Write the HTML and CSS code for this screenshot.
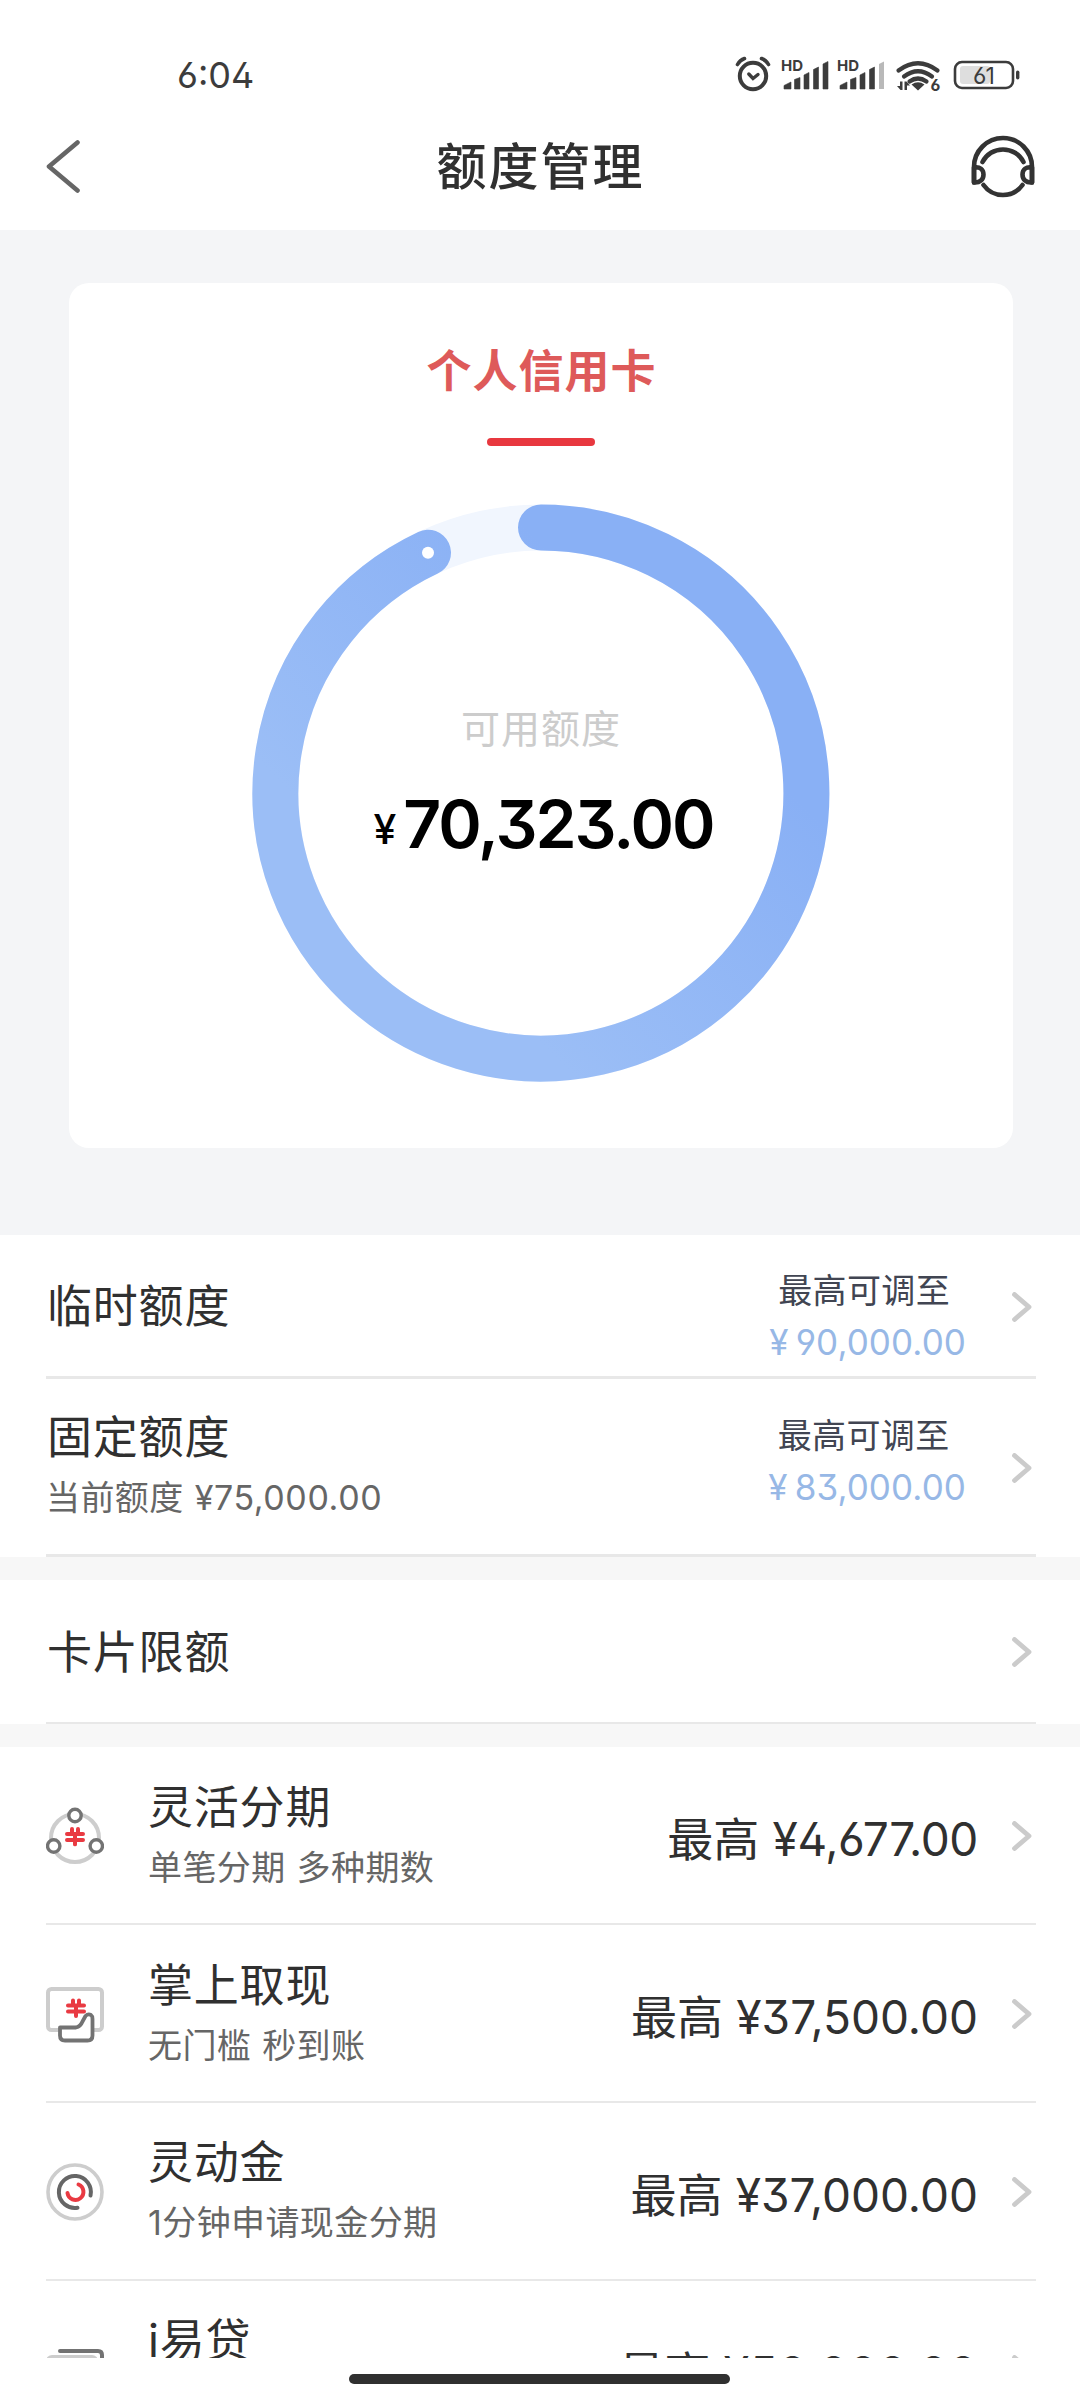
FILE: index.html
```html
<!DOCTYPE html>
<html lang="zh-CN">
<head>
<meta charset="utf-8">
<title>额度管理</title>
<link rel="stylesheet" href="styles.css">
</head>
<body>
<svg class="defs" width="0" height="0">
  <symbol id="chevron" viewBox="0 0 20 30"><path d="M2.500 2.500L17 15L2.500 27.500" fill="none" stroke="#cbcbcb" stroke-width="4.800" stroke-linecap="round" stroke-linejoin="round"/></symbol>
  <symbol id="yen" viewBox="0 0 20 20"><path d="M7 2.500V7.500M13 2.500V7.500M2 7.500H18M2 13.500H18M10 8V18" fill="none" stroke="#e93a42" stroke-width="4" stroke-linecap="round"/></symbol>
</svg>
<div class="screen">
  <header class="top">
    <div class="status">
      <span class="time num">6:04</span>
      <svg class="status-icons" width="290" height="44" viewBox="0 0 290 44" fill="none" stroke="#3c3c3c">
        <g stroke-width="4" stroke-linecap="round">
          <circle cx="18" cy="24" r="13.200"/>
          <path d="M2.500 12.500Q5 8 9.500 6.500M33.500 12.500Q31 8 26.500 6.500" stroke-width="3.600"/>
          <path d="M13.800 22L18 26.500L23 22.500" stroke-width="3.400"/>
        </g>
        <g fill="#3c3c3c" stroke="none">
          <g id="sig">
            <path d="M49 37V33.500L56 30V37ZM59.500 37V27.500L65 25.500V37ZM69 37V23L74 20.500V37ZM78.500 37V17.500L83.500 15V37Z" stroke="#3c3c3c" stroke-width=".6" stroke-linejoin="round"/>
            <text x="46" y="19" class="hd">HD</text>
          </g>
          <use href="#sig" x="56"/>
          <path d="M88 37V12L93 9.500V37Z" stroke="#3c3c3c" stroke-width=".6"/>
          <path d="M144 37V12L149 9.500V37Z" fill="#b9b9b9"/>
          <path d="M183 38.500L176.500 32.500Q183 28 189.500 32.500Z"/>
          <path d="M167.500 29.500V38H165.500L162 34H165V29.500ZM169.500 38V29.500H171.500L175 33.500H172V38Z"/>
          <text x="195.500" y="39" class="wifi6">6</text>
          <rect x="281" y="18.500" width="3.400" height="9" rx="1.700"/>
          <rect x="225" y="14" width="30" height="18" rx="3" fill="#dedede"/>
          <text x="238" y="31.500" class="pct">61</text>
        </g>
        <path d="M163.500 18.500Q183 4 202.500 18.500M169 24.500Q183 14 197 24.500M174.500 29.500Q183 23.500 191.500 29.500" stroke-width="4.200" stroke-linecap="round"/>
        <rect x="220" y="10" width="58" height="26" rx="7" stroke-width="2.600"/>
      </svg>
    </div>
    <div class="nav">
      <svg class="back" width="36" height="56" viewBox="0 0 36 56"><path d="M31.500 4.500L3 28.500L31.500 52.500" fill="none" stroke="#666" stroke-width="4.600" stroke-linecap="round" stroke-linejoin="round"/></svg>
      <h1 class="title">额度管理</h1>
      <svg class="service" width="64" height="64" viewBox="0 0 64 64" fill="none" stroke="#333" stroke-width="4.600" stroke-linecap="round">
        <path d="M3 48.500V33A29 29 0 0 1 61 33V48.500" stroke-linejoin="round"/>
        <path d="M3 48.500V33.500C9 32.500 12.500 35.500 12.500 40.500S9 49 3 48.500ZM61 48.500V33.500C55 32.500 51.500 35.500 51.500 40.500S55 49 61 48.500Z" stroke-linejoin="round"/>
        <path d="M11.500 28A23 23 0 0 1 52.500 28M12.500 51A24 24 0 0 0 51.500 51"/>
      </svg>
    </div>
  </header>

  <main class="content">
    <section class="hero">
      <div class="card">
        <div class="tab">个人信用卡</div>
        <div class="tab-line"></div>
        <div class="ring">
          <svg width="578" height="578" viewBox="0 0 578 578" fill="none">
            <defs><linearGradient id="blue" x1="420" y1="170" x2="170" y2="420" gradientUnits="userSpaceOnUse"><stop offset="0" stop-color="#89b0f5"/><stop offset="1" stop-color="#9bbef6"/></linearGradient></defs>
            <circle cx="289" cy="289" r="265.500" stroke="#f1f6fe" stroke-width="46"/>
            <path d="M289 23.500A265.500 265.500 0 1 1 176 48.700" stroke="url(#blue)" stroke-width="46" stroke-linecap="round"/>
            <circle cx="176" cy="48.700" r="6" fill="#fff"/>
          </svg>
          <div class="ring-text">
            <div class="ring-label">可用额度</div>
            <div class="ring-value num"><span class="cur">¥</span>70,323.00</div>
          </div>
        </div>
      </div>
    </section>

    <section class="group thick">
      <div class="row short">
        <div class="name">临时额度</div>
        <div class="adjust low"><span class="hint">最高可调至</span><span class="blue num"><i>¥</i>90,000.00</span></div>
        <svg class="go"><use href="#chevron"/></svg>
      </div>
      <div class="row tall">
        <div class="text"><div class="name">固定额度</div><div class="sub">当前额度 <span class="num amount">¥75,000.00</span></div></div>
        <div class="adjust high"><span class="hint">最高可调至</span><span class="blue num"><i>¥</i>83,000.00</span></div>
        <svg class="go"><use href="#chevron"/></svg>
      </div>
    </section>

    <section class="group">
      <div class="row short">
        <div class="name">卡片限额</div>
        <svg class="go"><use href="#chevron"/></svg>
      </div>
    </section>

    <section class="group">
      <div class="row tall">
        <svg class="icon" viewBox="0 0 58 60" fill="none">
          <circle cx="29" cy="32" r="24" stroke="#cdcdcd" stroke-width="4"/>
          <g fill="#fff" stroke="#737373" stroke-width="3.400"><circle cx="29" cy="9.500" r="6.200"/><circle cx="7.700" cy="40" r="6.200"/><circle cx="50.300" cy="40" r="6.200"/></g>
          <use href="#yen" x="19" y="20.500" width="20" height="20"/>
        </svg>
        <div class="text"><div class="name">灵活分期</div><div class="sub">单笔分期 多种期数</div></div>
        <div class="max">最高 <span class="num narrow">¥4,677.00</span></div>
        <svg class="go"><use href="#chevron"/></svg>
      </div>
      <div class="row tall">
        <svg class="icon" viewBox="0 0 58 60" fill="none">
          <rect x="2" y="5" width="54" height="41" rx="3.500" stroke="#cdcdcd" stroke-width="4"/>
          <path d="M14 43.500H30Q34.500 42.500 36.500 37.500L39.500 32Q42 29.500 45 31Q46.500 32 46.500 35V51.500Q46.500 56.500 41.500 56.500H19Q14 56.500 14 51.500Z" fill="#fff" stroke="#737373" stroke-width="3.800" stroke-linejoin="round"/>
          <use href="#yen" x="20" y="14" width="20" height="20"/>
        </svg>
        <div class="text"><div class="name">掌上取现</div><div class="sub">无门槛 秒到账</div></div>
        <div class="max">最高 <span class="num">¥37,500.00</span></div>
        <svg class="go"><use href="#chevron"/></svg>
      </div>
      <div class="row tall">
        <svg class="icon" viewBox="0 0 58 60" fill="none" stroke-linecap="round">
          <circle cx="29" cy="30" r="27" stroke="#cdcdcd" stroke-width="3.600"/>
          <path d="M44.500 33.500A16 16 0 1 0 31.500 45.800" stroke="#666" stroke-width="4"/>
          <path d="M32.500 22.500A8 8 0 1 1 21.500 31" stroke="#e93a42" stroke-width="4"/>
        </svg>
        <div class="text"><div class="name">灵动金</div><div class="sub"><span class="num">1</span>分钟申请现金分期</div></div>
        <div class="max">最高 <span class="num">¥37,000.00</span></div>
        <svg class="go"><use href="#chevron"/></svg>
      </div>
      <div class="row tall">
        <svg class="icon" viewBox="0 0 58 60" fill="none" stroke-linecap="round">
          <path d="M14 11H52Q56 11 56 15V42" stroke="#737373" stroke-width="4"/>
          <rect x="2" y="17" width="48" height="36" rx="4" stroke="#cdcdcd" stroke-width="4"/>
        </svg>
        <div class="text first-line"><div class="name"><span class="num">i</span>易贷</div></div>
        <div class="max">最高 <span class="num wide">¥50,000.00</span></div>
        <svg class="go"><use href="#chevron"/></svg>
      </div>
    </section>
  </main>

  <footer class="gesture"><div class="pill"></div></footer>
</div>
</body>
</html>
```
FILE: styles.css
```css
* { box-sizing: border-box; margin: 0; padding: 0; }

body {
  width: 1080px;
  background: #fff;
  color: #303030;
  font-family: "Noto Sans CJK SC", sans-serif;
}

.defs { display: block; position: absolute; }

.num {
  font-family: Inter, "Noto Sans CJK SC", sans-serif;
  font-feature-settings: "ss01", "cv09";
}

.screen {
  display: flex;
  flex-direction: column;
  width: 1080px;
  height: 2400px;
  overflow: hidden;
}

.top { flex: none; height: 230px; background: #fff; }

.status {
  display: flex;
  justify-content: space-between;
  height: 100px;
  padding: 52px 55px 0 177px;
}

.time { font-size: 36px; line-height: 46px; color: #3c3c3c; }

.status-icons { display: block; }
.hd { font: 700 15px Inter, sans-serif; }
.wifi6 { font: 700 16px Inter, sans-serif; font-feature-settings: "ss01"; }
.pct { font: 400 23px Inter, sans-serif; font-feature-settings: "ss01"; letter-spacing: -1px; }

.nav {
  display: flex;
  align-items: center;
  justify-content: space-between;
  height: 132px;
  padding: 0 45px 0 46px;
}

.back { margin-right: 28px; }

.title {
  padding-bottom: 6px;
  font-size: 50px;
  font-weight: 500;
  line-height: 60px;
  letter-spacing: 2px;
}

.content { flex: none; height: 2128px; overflow: hidden; }

.hero {
  height: 1005px;
  padding: 53px 67px 0 69px;
  background: #f4f5f7;
}

.card {
  display: flex;
  flex-direction: column;
  align-items: center;
  height: 865px;
  padding-top: 54px;
  border-radius: 20px;
  background: #fff;
}

.tab {
  padding-left: 1px;
  font-size: 45px;
  font-weight: 700;
  line-height: 64px;
  letter-spacing: 1px;
  color: #de5a5a;
}

.tab-line {
  width: 108px;
  height: 8px;
  margin: 37px 0 58px;
  border-radius: 4px;
  background: #e8383f;
}

.ring { display: grid; }
.ring > * { grid-area: 1 / 1; }

.ring-text {
  display: flex;
  flex-direction: column;
  align-items: center;
  padding-top: 194px;
}

.ring-label { font-size: 39px; line-height: 56px; letter-spacing: 1px; color: #ccc; }

.ring-value {
  display: flex;
  align-items: baseline;
  gap: 7px;
  margin-top: 29px;
  padding-left: 5px;
  font-size: 66px;
  font-weight: 600;
  line-height: 82px;
  letter-spacing: -2px;
  color: #000;
}

.cur { font-size: 41px; font-weight: 500; letter-spacing: 0; transform: translateY(-4px); }

.group { background: #fff; --line: 2px; }
.group + .group { border-top: 23px solid #f7f7f7; }
.group.thick { --line: 3px; }

.row {
  display: flex;
  align-items: center;
  margin: 0 44px 0 46px;
  border-bottom: var(--line) solid #e8e8e8;
}

.short { height: 144px; }
.tall { height: 178px; }

.name { padding: 0 0 4px 1px; font-size: 45px; line-height: 54px; letter-spacing: .8px; }
.row > .name { padding-bottom: 3px; }
.sub { margin-top: 5px; font-size: 34px; line-height: 50px; letter-spacing: .4px; word-spacing: 3px; color: #666; white-space: nowrap; }
.amount { letter-spacing: .6px; }
.text { padding-bottom: 2px; }
.icon + .text .name { padding-left: 0; }
.first-line { align-self: flex-start; margin-top: 30px; }

.icon { flex: none; width: 58px; height: 60px; margin: 2px 44px 0 0; }

.adjust {
  display: flex;
  flex-direction: column;
  align-items: center;
  margin-left: auto;
  font-size: 34px;
  line-height: 52px;
  letter-spacing: .4px;
  color: #414552;
}

.adjust.low { margin-top: 20px; }
.adjust.high { margin-bottom: 12px; }
.hint { padding-right: 7px; }

.blue { padding-top: 1px; font-size: 35px; letter-spacing: .1px; color: #97b8e6; }
.blue i { margin-right: 7px; font-style: normal; }

.max { margin: 4px 0 0 auto; font-size: 46px; line-height: 56px; white-space: nowrap; word-spacing: 3px; }
.narrow { letter-spacing: -.4px; }
.wide { letter-spacing: .5px; }

.go { flex: none; width: 20px; height: 30px; margin: 2px 4px 0 34px; }
.adjust + .go { margin-left: 46px; }
.name + .go { margin-left: auto; }

.gesture { display: flex; justify-content: center; height: 42px; padding: 16px 1px 0 0; }
.pill { width: 381px; height: 10px; border-radius: 5px; background: #303030; }
```
